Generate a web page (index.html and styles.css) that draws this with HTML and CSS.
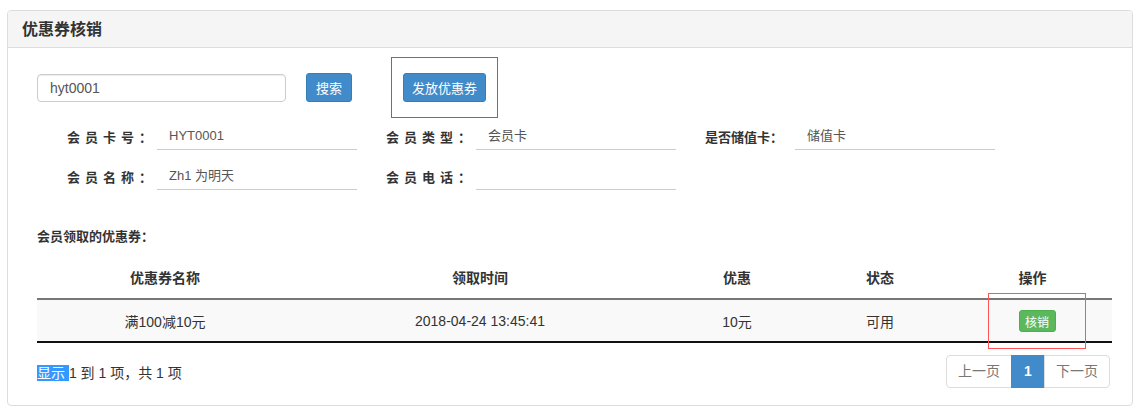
FILE: index.html
```html
<!DOCTYPE html>
<html lang="zh-CN">

<head>
    <meta charset="UTF-8">
    <title>优惠券核销</title>
    <link rel="stylesheet" href="styles.css">
</head>

<body>
    <div class="panel">
        <div class="panel-heading">
            <h3 class="panel-title">优惠券核销</h3>
        </div>
        <div class="panel-body">
            <div class="toolbar">
                <input type="text" class="search-input" value="hyt0001">
                <button class="btn btn-primary btn-search">搜索</button>
                <div class="mark-box mark-send">
                    <button class="btn btn-primary">发放优惠券</button>
                </div>
            </div>

            <div class="member-form">
                <div class="form-group">
                    <label class="spaced">会员卡号：</label>
                    <div class="field">HYT0001</div>
                </div>
                <div class="form-group">
                    <label class="spaced">会员类型：</label>
                    <div class="field">会员卡</div>
                </div>
                <div class="form-group">
                    <label>是否储值卡：</label>
                    <div class="field">储值卡</div>
                </div>
                <div class="form-group">
                    <label class="spaced">会员名称：</label>
                    <div class="field">Zh1 为明天</div>
                </div>
                <div class="form-group">
                    <label class="spaced">会员电话：</label>
                    <div class="field"></div>
                </div>
            </div>

            <h4 class="section-title">会员领取的优惠券：</h4>

            <table class="coupon-table">
                <colgroup>
                    <col class="col-name">
                    <col class="col-time">
                    <col class="col-amount">
                    <col class="col-state">
                    <col class="col-action">
                </colgroup>
                <thead>
                    <tr>
                        <th>优惠券名称</th>
                        <th>领取时间</th>
                        <th>优惠</th>
                        <th>状态</th>
                        <th>操作</th>
                    </tr>
                </thead>
                <tbody>
                    <tr>
                        <td>满100减10元</td>
                        <td>2018-04-24 13:45:41</td>
                        <td>10元</td>
                        <td>可用</td>
                        <td class="action-cell">
                            <div class="mark-box mark-action">
                                <button class="btn btn-success btn-xs">核销</button>
                            </div>
                        </td>
                    </tr>
                </tbody>
            </table>

            <div class="table-footer">
                <div class="table-info"><span class="selected">显示 </span>1 到 1 项，共 1 项</div>
                <ul class="pagination">
                    <li><a href="#">上一页</a></li>
                    <li class="active"><a href="#">1</a></li>
                    <li><a href="#">下一页</a></li>
                </ul>
            </div>
        </div>
    </div>
</body>

</html>
```

FILE: styles.css
```css
body {
    margin: 0;
    font-family: "Liberation Sans", "Noto Sans CJK SC", sans-serif;
    font-size: 13px;
    color: #333;
    background-color: #fff;
}

.panel {
    margin: 10px 0 0 7px;
    width: 1126px;
    height: 396px;
    border: 1px solid #ddd;
    border-radius: 4px;
    box-sizing: border-box;
    overflow: hidden;
}

.panel-heading {
    height: 37px;
    padding: 0 14px 3px 14px;
    background-color: #f5f5f5;
    border-bottom: 1px solid #ddd;
    display: flex;
    align-items: center;
    box-sizing: border-box;
}

.panel-title {
    margin: 0;
    font-size: 16px;
    font-weight: bold;
    color: #333;
}

.panel-body {
    padding: 9px 21px 0 29px;
}

.toolbar {
    display: flex;
    align-items: center;
    height: 61px;
}

.search-input {
    width: 249px;
    height: 28px;
    margin: 0;
    padding: 0 12px;
    border: 1px solid #ccc;
    border-radius: 4px;
    box-shadow: inset 0 1px 1px rgba(0, 0, 0, .075);
    box-sizing: border-box;
    font-family: inherit;
    font-size: 14px;
    color: #555;
}

.btn {
    height: 29px;
    padding: 0 12px;
    border: 1px solid transparent;
    border-radius: 3px;
    font-family: inherit;
    font-size: 13px;
    color: white;
    cursor: pointer;
    box-sizing: border-box;
}

.btn-primary {
    background-color: #428bca;
    border-color: #357ebd;
}

.btn-search {
    margin-left: 20px;
    width: 46px;
    padding: 0;
}

.btn-success {
    background-color: #5cb85c;
    border-color: #4cae4c;
}

.btn-xs {
    height: 22px;
    padding: 0 5px;
    font-size: 12px;
}

/* red marker boxes drawn on the screenshot */
.mark-box {
    border: 1px solid #f00;
    box-sizing: border-box;
    display: flex;
    align-items: center;
}

.mark-send {
    margin-left: 39px;
    height: 61px;
    padding: 0 11px;
    border-color: #f33;
}

.mark-send .btn {
    width: 83px;
    padding: 0;
}

.member-form {
    display: grid;
    grid-template-columns: repeat(3, 319px);
    row-gap: 13px;
    margin: 5px 0 0 30px;
}

.form-group {
    display: flex;
    align-items: center;
}

.form-group label {
    width: 90px;
    font-weight: bold;
    font-size: 13px;
    white-space: nowrap;
}

.form-group label.spaced {
    letter-spacing: 5px;
}

.field {
    width: 200px;
    height: 27px;
    padding: 0 12px;
    line-height: 26px;
    border-bottom: 1px solid #ccc;
    box-sizing: border-box;
    font-size: 13px;
    color: #555;
}

.section-title {
    margin: 38px 0 0 0;
    font-size: 13px;
    font-weight: bold;
    line-height: 18px;
}

.coupon-table {
    width: 1075px;
    margin-top: 10px;
    border-collapse: collapse;
    table-layout: fixed;
    font-size: 14px;
}

.col-name {
    width: 256px;
}

.col-time {
    width: 374px;
}

.col-amount {
    width: 140px;
}

.col-state {
    width: 146px;
}

.col-action {
    width: 159px;
}

.coupon-table th {
    height: 42px;
    padding: 0;
    text-align: center;
    font-weight: bold;
    border-bottom: 2px solid #777;
}

.coupon-table td {
    height: 41px;
    padding: 0;
    text-align: center;
    color: #333;
    background-color: #f9f9f9;
    border-bottom: 2px solid #111;
}

.action-cell {
    position: relative;
}

.mark-action {
    position: absolute;
    left: 35px;
    top: -7px;
    width: 98px;
    height: 56px;
    justify-content: center;
    border-color: #f55;
}

.mark-action .btn {
    width: 37px;
}

.table-footer {
    display: flex;
    justify-content: space-between;
    align-items: center;
    margin-top: 12px;
    width: 1073px;
}

.table-info {
    font-size: 14px;
    color: #333;
}

.selected {
    background-color: #39f;
    color: white;
}

.pagination {
    display: flex;
    margin: 0;
    padding: 0;
    list-style: none;
}

.pagination li a {
    display: block;
    height: 33px;
    line-height: 31px;
    padding: 0 11px;
    border: 1px solid #ddd;
    margin-left: -1px;
    box-sizing: border-box;
    font-size: 14px;
    color: #777;
    text-decoration: none;
    background-color: #fff;
}

.pagination li:first-child a {
    border-radius: 4px 0 0 4px;
}

.pagination li:last-child a {
    border-radius: 0 4px 4px 0;
}

.pagination li.active a {
    width: 34px;
    padding: 0;
    text-align: center;
    background-color: #428bca;
    border-color: #428bca;
    color: white;
    font-weight: bold;
}
```
